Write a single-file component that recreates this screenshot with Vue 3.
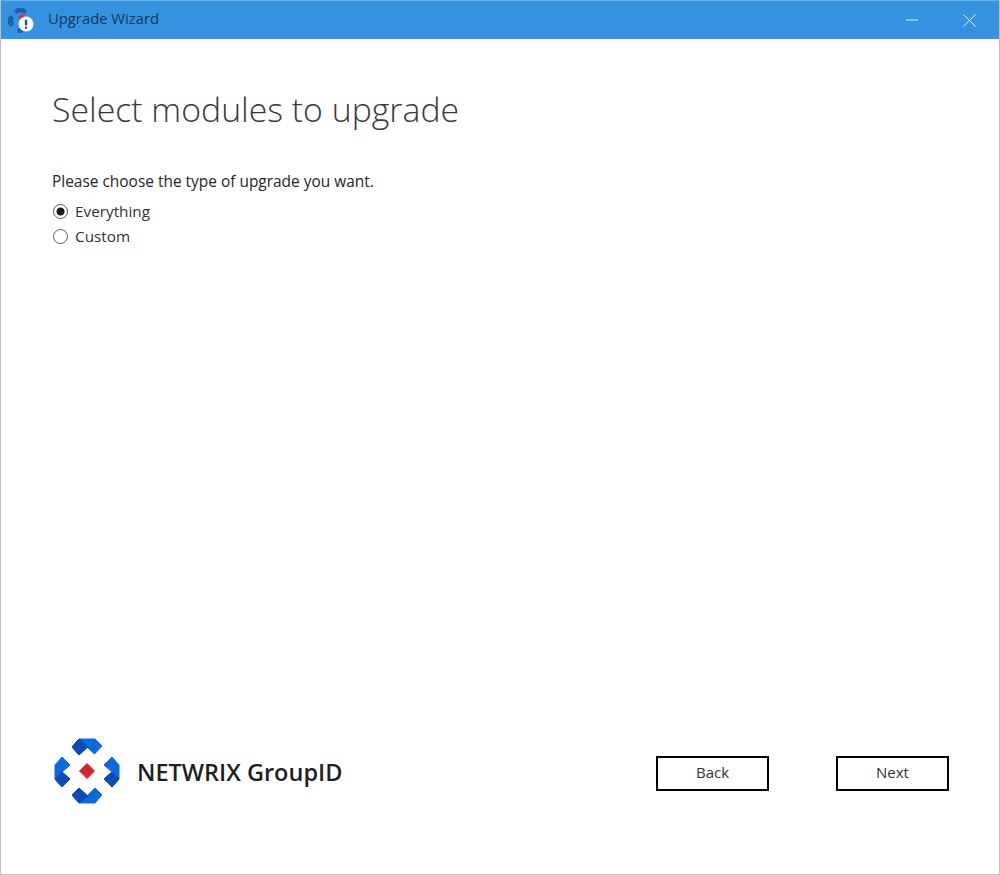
<script setup>
import { ref } from 'vue'

const upgradeType = ref('everything')
const options = [
  { value: 'everything', label: 'Everything' },
  { value: 'custom', label: 'Custom' }
]
</script>

<template>
  <div class="window">
    <header class="titlebar">
      <svg class="app-icon" width="30" height="30" viewBox="0 0 30 30">
        <path d="M12 3h7l3 3-2 3-4-2-4 2-3-3z" fill="#1d5fb8" />
        <path d="M3 13l3-3 3 3-1 3 1 3-3 3-3-3z" fill="#1d5fb8" />
        <path d="M12 24l3-1 4 2-2 3h-4z" fill="#1d5fb8" />
        <path d="M13 12l4-4 4 4-4 4z" fill="#d8343c" />
        <circle cx="21" cy="19" r="7.500" fill="#fff" />
        <rect x="19.800" y="14.500" width="2.400" height="6" rx="1.200" fill="#1f4f8c" />
        <circle cx="21" cy="22.800" r="1.200" fill="#1f4f8c" />
      </svg>
      <span class="titlebar-text">Upgrade Wizard</span>
      <div class="window-controls">
        <svg width="12" height="12" viewBox="0 0 12 12">
          <path d="M0 6h12" stroke="#dcefff" stroke-width="1" fill="none" />
        </svg>
        <svg width="13" height="13" viewBox="0 0 13 13">
          <path d="M0.500 0.500l12 12M12.500 0.500l-12 12" stroke="#e6f3ff" stroke-width="1" fill="none" />
        </svg>
      </div>
    </header>

    <main class="content">
      <h1 class="heading">Select modules to upgrade</h1>
      <p class="prompt">Please choose the type of upgrade you want.</p>
      <div class="radio-group">
        <label v-for="opt in options" :key="opt.value" class="radio-row">
          <input v-model="upgradeType" class="radio" type="radio" name="upgrade" :value="opt.value" />
          <span>{{ opt.label }}</span>
        </label>
      </div>
    </main>

    <footer class="footer">
      <div class="brand">
        <svg class="brand-mark" width="75" height="75" viewBox="0 0 75 75" stroke-linejoin="round">
          <g fill="#0b6ae0" stroke="#0b6ae0">
            <path d="M22 12l7-8h16l7 7-7.500 8L37 12l-8 8z" />
            <path d="M22 60l7-7 8 8 8-8 7 7-7 8H29z" />
            <path d="M5 30l7-8 8 8-8 7 8 7-8 8-7-8z" />
            <path d="M62 22l7 8v14l-7 8-8-8 8-7-8-7z" />
          </g>
          <g fill="#0a4cb4" stroke="#0a4cb4">
            <path d="M22 12l7-8 9 8-9 8z" />
            <path d="M22 60l7-7 9 8-9 7z" />
            <path d="M5 44l7-7 8 7-8 8z" />
            <path d="M54 44l8-7 7 7-7 8z" />
          </g>
          <path d="M37 28.500l7.500 7.500-7.500 7.500-7.500-7.500z" fill="#d8232f" stroke="#d8232f" />
        </svg>
        <span class="brand-name">NETWRIX GroupID</span>
      </div>
      <div class="actions">
        <button class="btn" type="button">Back</button>
        <button class="btn" type="button">Next</button>
      </div>
    </footer>
  </div>
</template>

<style scoped>
.window {
  box-sizing: border-box;
  width: 1000px;
  height: 875px;
  display: flex;
  flex-direction: column;
  background: #ffffff;
  border: 1px solid #c0c0c0;
  border-top: none;
  font-family: "Open Sans", "Noto Sans", sans-serif;
  color: #262626;
}

.titlebar {
  height: 39px;
  flex: none;
  box-sizing: border-box;
  display: flex;
  align-items: center;
  background: #3492e1;
  border-top: 1px solid #6aaee6;
  padding: 0 23px 0 4px;
}

.app-icon {
  flex: none;
}

.titlebar-text {
  margin-left: 13px;
  margin-top: -4px;
  font-size: 14.800px;
  color: #17395c;
}

.window-controls {
  margin-left: auto;
  display: flex;
  align-items: center;
  gap: 45px;
}

.content {
  padding: 46px 51px 0;
}

.heading {
  margin: 0;
  font-size: 33.800px;
  line-height: 48px;
  font-weight: 300;
  color: #3a3a3a;
}

.prompt {
  margin: 38px 0 0;
  font-size: 15.450px;
  line-height: 20px;
  color: #262626;
}

.radio-group {
  margin-top: 10px;
  display: flex;
  flex-direction: column;
  gap: 5px;
}

.radio-row {
  display: flex;
  align-items: center;
  height: 20px;
  font-size: 15.300px;
  color: #333333;
}

.radio {
  appearance: none;
  box-sizing: border-box;
  width: 15px;
  height: 15px;
  margin: 0 7px 0 1px;
  border: 1px solid #5c5c5c;
  border-radius: 50%;
  background: #ffffff;
}

.radio:checked {
  background: radial-gradient(circle, #1a1a1a 0, #1a1a1a 3.600px, #ffffff 4.400px);
}

.footer {
  margin-top: auto;
  margin-bottom: 64px;
  padding: 0 50px 0 49px;
  display: flex;
  align-items: center;
  justify-content: space-between;
}

.brand {
  display: flex;
  align-items: center;
  gap: 12px;
}

.brand-mark {
  margin-top: -1px;
}

.brand-name {
  margin-top: -2px;
  font-size: 23.500px;
  font-weight: 600;
  color: #1f1f1f;
}

.actions {
  display: flex;
  gap: 67px;
}

.btn {
  box-sizing: border-box;
  width: 113px;
  height: 35px;
  background: #ffffff;
  border: 2px solid #000000;
  font-family: inherit;
  font-size: 15px;
  color: #333333;
  padding: 0 0 2px;
}
</style>
